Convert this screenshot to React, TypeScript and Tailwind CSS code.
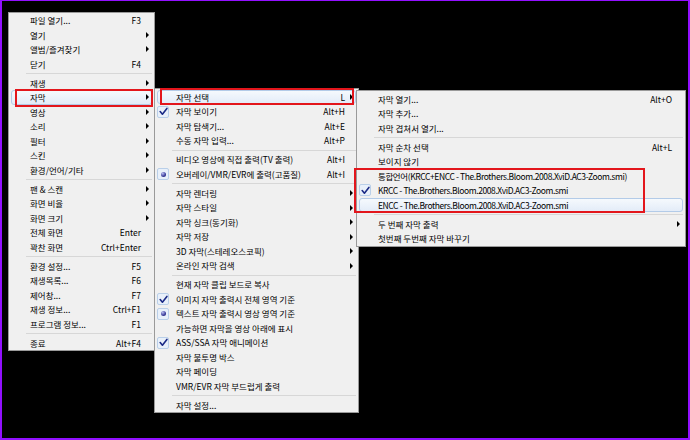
type Entry =
  | { sep: true }
  | { label: string; hotkey?: string; sub?: boolean; mark?: 'check' | 'dot'; hover?: boolean; latin?: boolean; sep?: false };

const S: Entry = { sep: true };

const mainMenu: Entry[] = [
  { label: '파일 열기...', hotkey: 'F3' },
  { label: '열기', sub: true },
  { label: '앨범/즐겨찾기', sub: true },
  { label: '닫기', hotkey: 'F4' },
  S,
  { label: '재생', sub: true },
  { label: '자막', sub: true, hover: true },
  { label: '영상', sub: true },
  { label: '소리', sub: true },
  { label: '필터', sub: true },
  { label: '스킨', sub: true },
  { label: '환경/언어/기타', sub: true },
  S,
  { label: '팬 & 스캔', sub: true },
  { label: '화면 비율', sub: true },
  { label: '화면 크기', sub: true },
  { label: '전체 화면', hotkey: 'Enter' },
  { label: '꽉찬 화면', hotkey: 'Ctrl+Enter' },
  S,
  { label: '환경 설정...', hotkey: 'F5' },
  { label: '재생목록...', hotkey: 'F6' },
  { label: '제어창...', hotkey: 'F7' },
  { label: '재생 정보...', hotkey: 'Ctrl+F1' },
  { label: '프로그램 정보...', hotkey: 'F1' },
  S,
  { label: '종료', hotkey: 'Alt+F4' },
];

const subtitleMenu: Entry[] = [
  { label: '자막 선택', hotkey: 'L', sub: true, hover: true },
  { label: '자막 보이기', hotkey: 'Alt+H', mark: 'check' },
  { label: '자막 탐색기...', hotkey: 'Alt+E' },
  { label: '수동 자막 입력...', hotkey: 'Alt+P' },
  S,
  { label: '비디오 영상에 직접 출력(TV 출력)', hotkey: 'Alt+I' },
  { label: '오버레이/VMR/EVR에 출력(고품질)', hotkey: 'Alt+I', mark: 'dot' },
  S,
  { label: '자막 렌더링', sub: true },
  { label: '자막 스타일', sub: true },
  { label: '자막 싱크(동기화)', sub: true },
  { label: '자막 저장', sub: true },
  { label: '3D 자막(스테레오스코픽)', sub: true },
  { label: '온라인 자막 검색', sub: true },
  S,
  { label: '현재 자막 클립 보드로 복사' },
  { label: '이미지 자막 출력시 전체 영역 기준', mark: 'check' },
  { label: '텍스트 자막 출력시 영상 영역 기준', mark: 'dot' },
  { label: '가능하면 자막을 영상 아래에 표시' },
  { label: 'ASS/SSA 자막 애니메이션', mark: 'check' },
  { label: '자막 불투명 박스' },
  { label: '자막 페이딩' },
  { label: 'VMR/EVR 자막 부드럽게 출력' },
  S,
  { label: '자막 설정...' },
];

const selectMenu: Entry[] = [
  { label: '자막 열기...', hotkey: 'Alt+O' },
  { label: '자막 추가...' },
  { label: '자막 겹쳐서 열기...' },
  S,
  { label: '자막 순차 선택', hotkey: 'Alt+L' },
  { label: '보이지 않기' },
  { label: '통합언어(KRCC+ENCC - The.Brothers.Bloom.2008.XviD.AC3-Zoom.smi)', latin: true },
  { label: 'KRCC - The.Brothers.Bloom.2008.XviD.AC3-Zoom.smi', mark: 'check', latin: true },
  { label: 'ENCC - The.Brothers.Bloom.2008.XviD.AC3-Zoom.smi', hover: true, latin: true },
  S,
  { label: '두 번째 자막 출력', sub: true },
  { label: '첫번째 두번째 자막 바꾸기' },
];

function Mark({ kind }: { kind: 'check' | 'dot' }) {
  return (
    <div className="absolute left-[2px] top-[1.25px] flex h-[12px] w-[12px] items-center justify-center rounded-[2px] border border-[#b9cfe9] bg-[#e8f0fa]">
      {kind === 'check' ? (
        <svg width="9" height="9" viewBox="0 0 9 9">
          <path d="M1.2 4.6 L3.4 7.2 L7.9 1.4" fill="none" stroke="#1b2a86" strokeWidth="1.6" strokeLinecap="round" strokeLinejoin="round" />
        </svg>
      ) : (
        <div className="h-[5px] w-[5px] rounded-full bg-[radial-gradient(circle_at_35%_30%,#b8bcf0,#3a3c9a_60%,#1e1f6a)]" />
      )}
    </div>
  );
}

function Menu({ items, className }: { items: Entry[]; className: string }) {
  return (
    <div className={`absolute flex flex-col border border-[#9a9a9a] bg-[#f0f0f0] text-[8.5px] leading-none text-black ${className}`}>
      {items.map((it, i) =>
        it.sep ? (
          <div key={i} className="flex h-[4.5px] items-center pl-[17px] pr-[2px]">
            <div className="h-px w-full bg-[#d7d7d7]" />
          </div>
        ) : (
          <div key={i} className="relative flex h-[14.5px] items-center pl-[21px] pr-[1px]">
            {it.hover && (
              <div className="absolute inset-x-[2px] inset-y-0 rounded-[3px] border border-[#b3cbe8] bg-gradient-to-b from-[#f5f9fd] to-[#e3ecf8]" />
            )}
            {it.mark && <Mark kind={it.mark} />}
            <span className={`relative flex-1 whitespace-nowrap ${it.latin ? 'tracking-[-0.4px]' : ''}`}>{it.label}</span>
            {it.hotkey && <span className="relative whitespace-nowrap">{it.hotkey}</span>}
            <span className="relative flex w-[12px] justify-center">
              {it.sub && (
                <span className="h-0 w-0 border-y-[3px] border-l-[3px] border-y-transparent border-l-black" />
              )}
            </span>
          </div>
        ),
      )}
    </div>
  );
}

export default function App() {
  return (
    <div className="relative h-[440px] w-[690px] overflow-hidden border-x-2 border-b-2 border-t border-[#9210ff] bg-black font-['Noto_Sans_CJK_KR',sans-serif]">
      <Menu items={mainMenu} className="left-[6px] top-[11px] w-[147px]" />
      <Menu items={subtitleMenu} className="left-[152px] top-[87px] w-[205px] pt-[0.75px]" />
      <Menu items={selectMenu} className="left-[354px] top-[88.5px] w-[330px] pt-px" />

      {/* red highlight boxes */}
      <div className="absolute left-[13px] top-[88px] h-[18px] w-[138px] border-2 border-[#e3161c]" />
      <div className="absolute left-[158px] top-[87px] h-[17px] w-[194px] border-2 border-[#e3161c]" />
      <div className="absolute left-[352px] top-[167px] h-[45px] w-[291px] border-2 border-[#e3161c]" />
    </div>
  );
}
